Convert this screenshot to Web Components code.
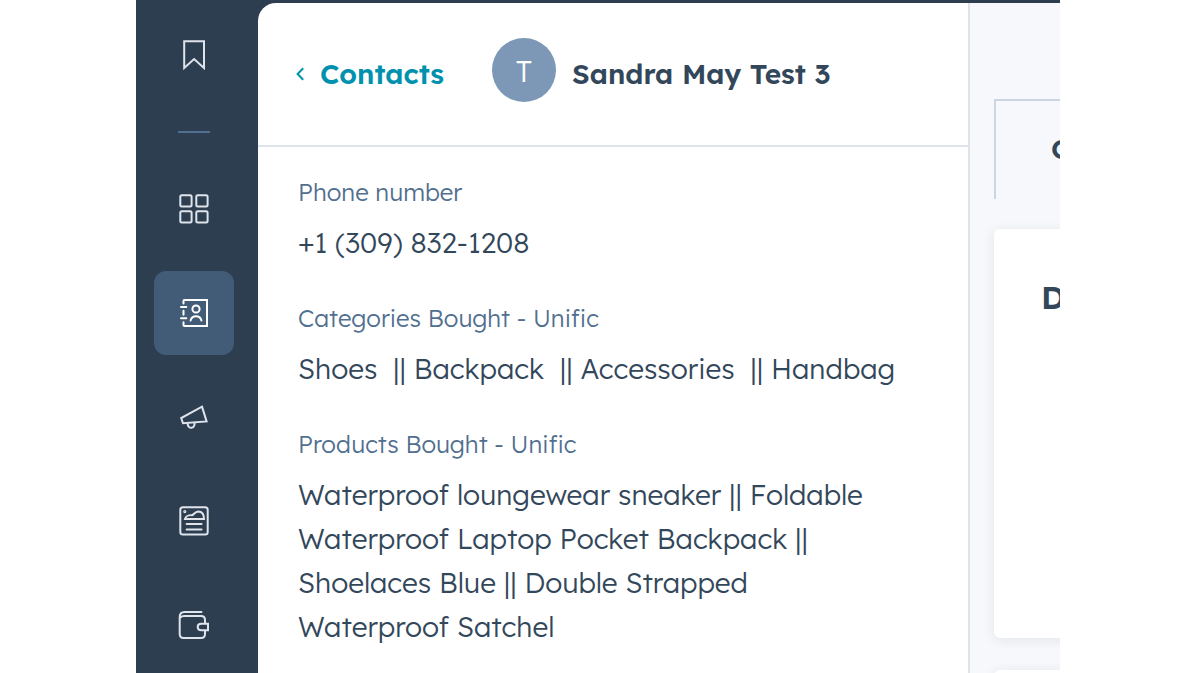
<!DOCTYPE html>
<html lang="en">
<head>
<meta charset="utf-8">
<title>Sandra May Test 3</title>
<meta name="viewport" content="width=device-width, initial-scale=1">
<style>
    body {
        margin: 0;
        background: #ffffff;
        font-family: "Lexend Deca", Lexend, "Noto Sans", sans-serif;
        font-weight: 300;
        color: #33475b;
    }
</style>
</head>
<body>
<crm-app>
    <nav-rail slot="rail">
        <nav-item icon="bookmark" label="Bookmarks"></nav-item>
        <nav-divider></nav-divider>
        <nav-item icon="grid" label="Workspaces"></nav-item>
        <nav-item icon="contacts" label="CRM" active></nav-item>
        <nav-item icon="megaphone" label="Marketing"></nav-item>
        <nav-item icon="content" label="Content"></nav-item>
        <nav-item icon="wallet" label="Commerce"></nav-item>
    </nav-rail>
    <contact-panel slot="record">
        <contact-header slot="header" initial="T" back="Contacts">Sandra May Test 3</contact-header>
        <contact-field label="Phone number">+1 (309) 832-1208</contact-field>
        <contact-field label="Categories Bought - Unific">Shoes  || Backpack  || Accessories  || Handbag</contact-field>
        <contact-field label="Products Bought - Unific">Waterproof loungewear sneaker || Foldable
Waterproof Laptop Pocket Backpack ||
Shoelaces Blue || Double Strapped
Waterproof Satchel</contact-field>
    </contact-panel>
    <detail-column slot="details">
        <detail-tab slot="tab">O</detail-tab>
        <detail-card heading="D"></detail-card>
        <detail-card></detail-card>
    </detail-column>
</crm-app>

<script>
const icons = {
    bookmark: '<path d="M6.2 2.3H26V29L16.1 20 6.2 29Z"/>',
    grid: `
        <rect x="2.3" y="2.3" width="11.3" height="11.3" rx="1.5"/>
        <rect x="18.3" y="2.3" width="11.3" height="11.3" rx="1.5"/>
        <rect x="2.3" y="18.3" width="11.3" height="11.3" rx="1.5"/>
        <rect x="18.3" y="18.3" width="11.3" height="11.3" rx="1.5"/>
    `,
    contacts: `
        <path d="M5.5 6.5V4Q5.5 3 6.5 3H29V29H6.5Q5.5 29 5.5 28V25.2M5.5 13.8V17.8"/>
        <path d="M3 10H8.3M3 21.3H8.3"/>
        <circle cx="18" cy="12" r="3.6"/>
        <path d="M12.6 23.6C13.3 20.4 15.3 19.3 18 19.3S22.7 20.4 23.4 23.6"/>
    `,
    megaphone: `
        <path d="M24 5.6 28.6 20.4 5 22.3 3.2 17Z"/>
        <path d="M9.6 22.6C10 28.6 16.8 28.2 16.6 21.8"/>
    `,
    content: `
        <rect x="2.3" y="2.2" width="27.4" height="27.4" rx="2.5"/>
        <circle cx="6.8" cy="6.6" r=".6"/>
        <path d="M7 14C7.6 11.6 10.4 9.8 14 10.2 16 9.6 16.8 6.6 20.4 6.5 24.6 6.5 26 10 26 14Z"/>
        <path d="M8.6 19H23.6M8.6 24.4H23.6"/>
    `,
    wallet: `
        <path d="M23.5 3H6.5Q1.7 3 1.7 8V25Q1.7 29 5.5 29H23Q27 29 27 25V22M2 9Q3 7 6 7H23Q27 7 27 11V14"/>
        <path d="M30 14.8H23.3Q19.7 14.8 19.7 18T23.3 21.2H30Z"/>
    `
}

customElements.define(
    'crm-app',
    class extends HTMLElement {
        constructor() {
            super()

            this.attachShadow({ mode: 'open' }).innerHTML = `
                <style>
                    :host {
                        display: grid;
                        grid-template-columns: 122px minmax(0, 1fr) 90px;
                        box-sizing: border-box;
                        height: 100vh;
                        margin: 0 137px 0 136px;
                        padding-top: 3px;
                        overflow: hidden;
                        background: #2d3e50;
                    }
                </style>

                <slot name="rail"></slot>
                <slot name="record"></slot>
                <slot name="details"></slot>
            `
        }
    }
)

customElements.define(
    'nav-rail',
    class extends HTMLElement {
        constructor() {
            super()

            this.attachShadow({ mode: 'open' }).innerHTML = `
                <style>
                    nav {
                        display: flex;
                        flex-direction: column;
                        gap: 20px;
                        padding: 10px 24px 0 18px;
                    }
                </style>

                <nav aria-label="Main"><slot></slot></nav>
            `
        }
    }
)

customElements.define(
    'nav-divider',
    class extends HTMLElement {
        constructor() {
            super()

            this.attachShadow({ mode: 'open' }).innerHTML = `
                <style>
                    :host {
                        display: block;
                        width: 32px;
                        height: 2px;
                        margin: 14px auto;
                        background: #516f90;
                    }
                </style>
            `
        }
    }
)

customElements.define(
    'nav-item',
    class extends HTMLElement {
        constructor() {
            super()

            this.attachShadow({ mode: 'open' }).innerHTML = `
                <style>
                    :host {
                        display: block;
                    }
                    button {
                        display: flex;
                        align-items: center;
                        justify-content: center;
                        width: 100%;
                        height: 84px;
                        padding: 0;
                        border: 0;
                        border-radius: 12px;
                        background: none;
                        color: #dfe3eb;
                        cursor: pointer;
                    }
                    :host([active]) button {
                        background: #425b76;
                        color: #ffffff;
                    }
                    svg {
                        width: 32px;
                        height: 32px;
                        fill: none;
                        stroke: currentColor;
                        stroke-width: 2;
                        stroke-linecap: round;
                    }
                </style>

                <button type="button" aria-label="${this.getAttribute('label')}">
                    <svg viewBox="0 0 32 32" aria-hidden="true">${icons[this.getAttribute('icon')]}</svg>
                </button>
            `
        }
    }
)

customElements.define(
    'contact-panel',
    class extends HTMLElement {
        constructor() {
            super()

            this.attachShadow({ mode: 'open' }).innerHTML = `
                <style>
                    :host {
                        display: block;
                        border-right: 2px solid #dfe3eb;
                        border-top-left-radius: 18px;
                        background: #ffffff;
                    }
                    .fields {
                        display: flex;
                        flex-direction: column;
                        gap: 33px;
                        padding: 25px 40px;
                    }
                </style>

                <slot name="header"></slot>
                <div class="fields"><slot></slot></div>
            `
        }
    }
)

customElements.define(
    'contact-header',
    class extends HTMLElement {
        constructor() {
            super()

            this.attachShadow({ mode: 'open' }).innerHTML = `
                <style>
                    :host {
                        display: flex;
                        gap: 16px;
                        box-sizing: border-box;
                        min-height: 144px;
                        padding: 35px 38px 0;
                        border-bottom: 2px solid #dfe3eb;
                        font-size: 28px;
                        line-height: 72px;
                        white-space: nowrap;
                    }
                    a {
                        display: flex;
                        align-items: center;
                        gap: 16px;
                        width: 180px;
                        height: 72px;
                        color: #0091ae;
                        font-weight: 600;
                        text-decoration: none;
                    }
                    svg {
                        width: 8px;
                        height: 14px;
                        fill: none;
                        stroke: currentColor;
                        stroke-width: 2;
                    }
                    .avatar {
                        width: 64px;
                        height: 64px;
                        border-radius: 50%;
                        background: #7c98b6;
                        color: #ffffff;
                        font-size: 30px;
                        line-height: 66px;
                        text-align: center;
                    }
                    h1 {
                        margin: 0;
                        font-size: 28px;
                        font-weight: 600;
                    }
                </style>

                <a href="#contacts">
                    <svg viewBox="0 0 8 14" aria-hidden="true"><path d="M7.2 1.2 1.6 7 7.2 12.8"/></svg>
                    <span>${this.getAttribute('back')}</span>
                </a>
                <div class="avatar">${this.getAttribute('initial')}</div>
                <h1><slot></slot></h1>
            `
        }
    }
)

customElements.define(
    'contact-field',
    class extends HTMLElement {
        constructor() {
            super()

            this.attachShadow({ mode: 'open' }).innerHTML = `
                <style>
                    :host {
                        display: block;
                    }
                    dl, dd {
                        margin: 0;
                    }
                    dt {
                        margin-bottom: 9px;
                        color: #516f90;
                        font-size: 24px;
                        line-height: 40px;
                    }
                    dd {
                        font-size: 28px;
                        line-height: 44px;
                        white-space: pre-wrap;
                    }
                </style>

                <dl>
                    <dt>${this.getAttribute('label')}</dt>
                    <dd><slot></slot></dd>
                </dl>
            `
        }
    }
)

customElements.define(
    'detail-column',
    class extends HTMLElement {
        constructor() {
            super()

            this.attachShadow({ mode: 'open' }).innerHTML = `
                <style>
                    :host {
                        display: block;
                        overflow: hidden;
                        background: #f6f8fb;
                    }
                    .cards {
                        display: flex;
                        flex-direction: column;
                        gap: 32px;
                        padding: 30px 0 0 24px;
                    }
                    .tabs {
                        padding: 96px 0 0 24px;
                    }
                </style>

                <div class="tabs"><slot name="tab"></slot></div>
                <div class="cards"><slot></slot></div>
            `
        }
    }
)

customElements.define(
    'detail-tab',
    class extends HTMLElement {
        constructor() {
            super()

            this.attachShadow({ mode: 'open' }).innerHTML = `
                <style>
                    :host {
                        display: block;
                    }
                    button {
                        display: block;
                        box-sizing: border-box;
                        width: 240px;
                        height: 100px;
                        padding: 0 0 4px 55px;
                        border: 2px solid #cbd6e2;
                        border-bottom: 0;
                        background: none;
                        color: inherit;
                        font: inherit;
                        font-size: 28px;
                        font-weight: 600;
                        text-align: left;
                    }
                </style>

                <button type="button"><slot></slot></button>
            `
        }
    }
)

customElements.define(
    'detail-card',
    class extends HTMLElement {
        constructor() {
            super()

            const heading = this.getAttribute('heading')

            this.attachShadow({ mode: 'open' }).innerHTML = `
                <style>
                    :host {
                        display: block;
                        box-sizing: border-box;
                        width: 480px;
                        min-height: 409px;
                        padding: 48px 47px;
                        border-radius: 6px;
                        background: #ffffff;
                        box-shadow: 0 2px 12px rgba(45, 62, 80, 0.1);
                    }
                    h2 {
                        margin: 0;
                        font-size: 32px;
                        font-weight: 600;
                        line-height: 40px;
                    }
                </style>

                ${heading ? `<h2>${heading}</h2>` : ''}
            `
        }
    }
)
</script>
</body>
</html>
